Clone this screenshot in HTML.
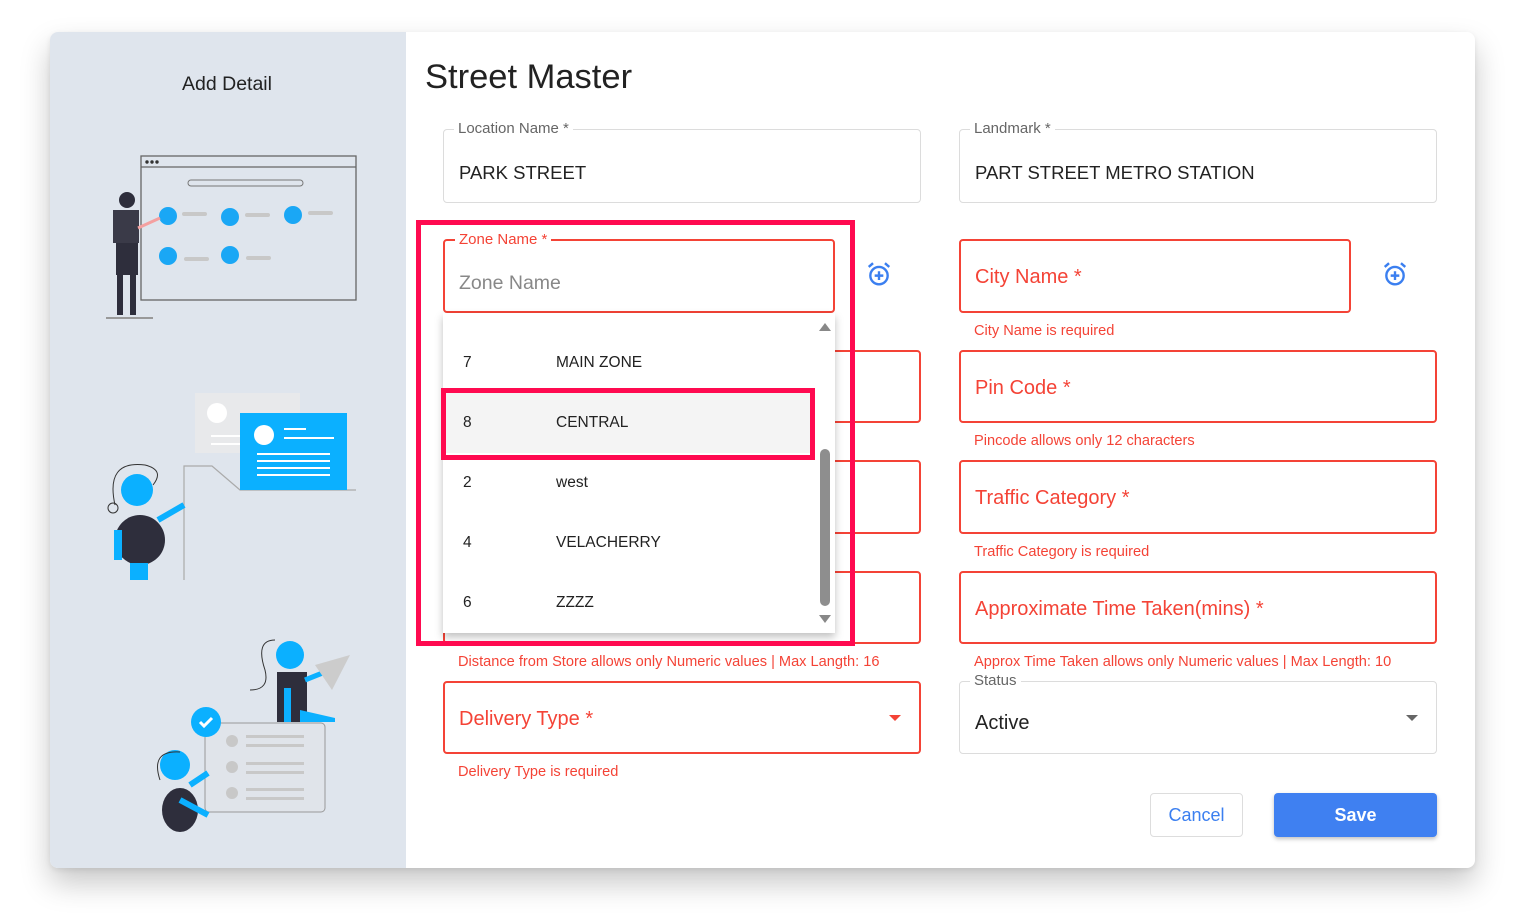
<!DOCTYPE html>
<html><head><meta charset="utf-8"><style>
*{box-sizing:border-box;margin:0;padding:0}
body{width:1519px;height:917px;background:#fff;font-family:"Liberation Sans",Arial,sans-serif;position:relative;overflow:hidden}
.card{position:absolute;left:50px;top:32px;width:1425px;height:836px;background:#fff;border-radius:8px;box-shadow:0 15px 30px rgba(0,0,0,.22),0 2px 6px rgba(0,0,0,.08);overflow:hidden}
.left{position:absolute;left:0;top:0;width:356px;height:836px;background:#dfe5ed}
.a{position:absolute}
.f{position:absolute;border:1px solid #dcdcdc;border-radius:4px}
.f.r{border:2px solid #f44336}
.lab{position:absolute;top:-10px;left:10px;background:#fff;padding:0 4px;font-size:15px;color:#666}
.r .lab{color:#f44336}
.val{position:absolute;left:15px;font-size:18.5px;color:#222}
.ph{position:absolute;left:14px;font-size:20px;color:#f44336}
.err{position:absolute;font-size:14.6px;color:#f44336}
.it{position:absolute;left:0;width:372px;height:60px;font-size:15.5px;color:#222}
.it span{position:absolute;top:50%;transform:translateY(-50%)}
</style></head><body>
<div class="card">
<div class="left">
<div class="a" style="left:132px;top:41px;font-size:19.5px;color:#222">Add Detail</div>
<svg class="a" style="left:0;top:0" width="356" height="836" viewBox="50 32 356 836">
<!-- ill 1 -->
<rect x="141" y="156" width="215" height="144" fill="none" stroke="#666" stroke-width="1.3"/>
<line x1="141" y1="167" x2="356" y2="167" stroke="#666" stroke-width="1.2"/>
<rect x="188" y="180" width="115" height="6" rx="3" fill="none" stroke="#777"/>
<circle cx="147" cy="162" r="1.7" fill="#333"/><circle cx="152" cy="162" r="1.7" fill="#333"/><circle cx="157" cy="162" r="1.7" fill="#333"/>
<g fill="#1aa7f5"><circle cx="168" cy="216" r="9"/><circle cx="230" cy="217" r="9"/><circle cx="293" cy="215" r="9"/><circle cx="168" cy="256" r="9"/><circle cx="230" cy="255" r="9"/></g>
<g fill="#c8c8c8"><rect x="182" y="212" width="25" height="4" rx="2"/><rect x="245" y="213" width="25" height="4" rx="2"/><rect x="308" y="211" width="25" height="4" rx="2"/><rect x="184" y="257" width="25" height="4" rx="2"/><rect x="246" y="256" width="25" height="4" rx="2"/></g>
<circle cx="127" cy="200" r="8" fill="#2e2e3c"/>
<rect x="113" y="210" width="26" height="33" fill="#3a3a48"/><rect x="116" y="243" width="22" height="32" fill="#2e2e3c"/>
<rect x="117" y="275" width="6" height="40" fill="#2e2e3c"/><rect x="130" y="275" width="6" height="40" fill="#2e2e3c"/>
<line x1="138" y1="228" x2="160" y2="218" stroke="#f4a0a0" stroke-width="3"/>
<line x1="106" y1="318" x2="153" y2="318" stroke="#999" stroke-width="2"/>
<!-- ill 2 -->
<rect x="195" y="393" width="105" height="60" fill="#e8e9eb"/>
<circle cx="217" cy="413" r="10" fill="#fff"/>
<g fill="#fff"><rect x="211" y="435" width="30" height="2"/><rect x="211" y="443" width="30" height="2"/></g>
<path d="M184 580 V466 h28 l28 24 h116" fill="#dfe5ed" stroke="#aaa" stroke-width="1.2"/>
<rect x="240" y="413" width="107" height="77" fill="#0bb0ff"/>
<circle cx="264" cy="435" r="10" fill="#fff"/>
<g fill="#fff"><rect x="284" y="428" width="22" height="2"/><rect x="284" y="437" width="50" height="2"/><rect x="257" y="453" width="73" height="2"/><rect x="257" y="460" width="73" height="2"/><rect x="257" y="467" width="73" height="2"/><rect x="257" y="474" width="73" height="2"/></g>
<path d="M115 505 q-10 -45 30 -40 q20 5 8 20" fill="none" stroke="#333"/><circle cx="113" cy="508" r="5" fill="none" stroke="#333"/>
<circle cx="137" cy="490" r="16" fill="#0bb0ff"/>
<ellipse cx="140" cy="540" rx="25" ry="25" fill="#2e2e3c"/>
<rect x="114" y="530" width="8" height="30" fill="#0bb0ff"/><rect x="130" y="563" width="18" height="17" fill="#0bb0ff"/>
<line x1="158" y1="520" x2="184" y2="505" stroke="#0bb0ff" stroke-width="6"/>
<!-- ill 3 -->
<rect x="205" y="723" width="120" height="89" rx="4" fill="#e0e4ea" stroke="#999"/>
<g fill="#c8c8c8"><circle cx="232" cy="741" r="6"/><circle cx="232" cy="767" r="6"/><circle cx="232" cy="793" r="6"/>
<rect x="246" y="735" width="58" height="3"/><rect x="246" y="744" width="58" height="3"/><rect x="246" y="762" width="58" height="3"/><rect x="246" y="771" width="58" height="3"/><rect x="246" y="788" width="58" height="3"/><rect x="246" y="797" width="58" height="3"/></g>
<circle cx="206" cy="722" r="15" fill="#0bb0ff"/><path d="M200 722 l4 4 l8 -8" stroke="#fff" stroke-width="3" fill="none"/>
<path d="M275 640 q-20 0 -10 30 q5 20 -15 20" fill="none" stroke="#333"/>
<circle cx="290" cy="655" r="14" fill="#0bb0ff"/><rect x="277" y="672" width="30" height="50" fill="#2e2e3c"/><rect x="284" y="688" width="7" height="34" fill="#0bb0ff"/>
<path d="M300 710 l35 8 v4 h-35z" fill="#0bb0ff"/>
<line x1="305" y1="680" x2="325" y2="672" stroke="#0bb0ff" stroke-width="5"/>
<path d="M315 665 L350 655 L332 690Z" fill="#ccc"/>
<circle cx="175" cy="765" r="15" fill="#0bb0ff"/><path d="M160 780 q-10 -30 20 -28" fill="none" stroke="#333"/>
<ellipse cx="180" cy="810" rx="18" ry="22" fill="#2e2e3c"/>
<line x1="180" y1="800" x2="208" y2="815" stroke="#0bb0ff" stroke-width="6"/><line x1="190" y1="785" x2="208" y2="773" stroke="#0bb0ff" stroke-width="6"/>
</svg>
</div>
<div class="a" style="left:375px;top:26px;font-size:34.5px;color:#222">Street Master</div>
</div>

<div class="f" style="left:443px;top:129px;width:478px;height:74px"><div class="lab">Location Name *</div><div class="val" style="top:32px">PARK STREET</div></div>
<div class="f" style="left:959px;top:129px;width:478px;height:74px"><div class="lab">Landmark *</div><div class="val" style="top:32px">PART STREET METRO STATION</div></div>

<div class="f r" style="left:443px;top:239px;width:392px;height:74px"><div class="lab">Zone Name *</div><div class="val" style="top:31px;color:#888;left:14px;font-size:19.5px">Zone Name</div></div>
<div class="f r" style="left:959px;top:239px;width:392px;height:74px"><div class="ph" style="top:25px">City Name *</div></div>
<div class="err" style="left:974px;top:323px">City Name is required</div>

<div class="f r" style="left:443px;top:350px;width:478px;height:73px"></div>
<div class="f r" style="left:959px;top:350px;width:478px;height:73px"><div class="ph" style="top:25px">Pin Code *</div></div>
<div class="err" style="left:974px;top:433px">Pincode allows only 12 characters</div>

<div class="f r" style="left:443px;top:460px;width:478px;height:74px"></div>
<div class="f r" style="left:959px;top:460px;width:478px;height:74px"><div class="ph" style="top:25px">Traffic Category *</div></div>
<div class="err" style="left:974px;top:544px">Traffic Category is required</div>

<div class="f r" style="left:443px;top:571px;width:478px;height:73px"></div>
<div class="f r" style="left:959px;top:571px;width:478px;height:73px"><div class="ph" style="top:25px">Approximate Time Taken(mins) *</div></div>
<div class="err" style="left:458px;top:654px">Distance from Store allows only Numeric values | Max Langth: 16</div>
<div class="err" style="left:974px;top:654px">Approx Time Taken allows only Numeric values | Max Length: 10</div>

<div class="f r" style="left:443px;top:681px;width:478px;height:73px"><div class="ph" style="top:25px">Delivery Type *</div>
<div class="a" style="right:18px;top:32px;width:0;height:0;border-left:6px solid transparent;border-right:6px solid transparent;border-top:6px solid #f44336"></div></div>
<div class="err" style="left:458px;top:764px">Delivery Type is required</div>
<div class="f" style="left:959px;top:681px;width:478px;height:73px"><div class="lab">Status</div><div class="val" style="top:30px;font-size:20px">Active</div>
<div class="a" style="right:18px;top:33px;width:0;height:0;border-left:6px solid transparent;border-right:6px solid transparent;border-top:6px solid #666"></div></div>

<div class="a" style="left:1150px;top:793px;width:93px;height:44px;border:1px solid #ddd;border-radius:4px;color:#3b7ff0;font-size:18px;text-align:center;line-height:42px">Cancel</div>
<div class="a" style="left:1274px;top:793px;width:163px;height:44px;background:#3f80f1;border-radius:4px;color:#fff;font-size:18px;font-weight:bold;text-align:center;line-height:44px;box-shadow:0 2px 4px rgba(0,0,0,.25)">Save</div>

<svg class="a" style="left:866px;top:261px" width="26" height="26" viewBox="0 0 24 24"><circle cx="12" cy="13.5" r="8" fill="none" stroke="#3b7ff0" stroke-width="2.2"/><path d="M12 9.5v8M8 13.5h8" stroke="#3b7ff0" stroke-width="2.2"/><path d="M2.5 5.5l4-3.5M21.5 5.5l-4-3.5" stroke="#3b7ff0" stroke-width="2.2"/></svg>
<svg class="a" style="left:1382px;top:261px" width="26" height="26" viewBox="0 0 24 24"><circle cx="12" cy="13.5" r="8" fill="none" stroke="#3b7ff0" stroke-width="2.2"/><path d="M12 9.5v8M8 13.5h8" stroke="#3b7ff0" stroke-width="2.2"/><path d="M2.5 5.5l4-3.5M21.5 5.5l-4-3.5" stroke="#3b7ff0" stroke-width="2.2"/></svg>

<div class="a" style="left:443px;top:313px;width:392px;height:320px;background:#fff;box-shadow:0 4px 8px rgba(0,0,0,.25);overflow:hidden">
<div class="it" style="top:20px"><span style="left:20px">7</span><span style="left:113px">MAIN ZONE</span></div>
<div class="it" style="top:80px;background:#f4f4f4"><span style="left:20px">8</span><span style="left:113px">CENTRAL</span></div>
<div class="it" style="top:140px"><span style="left:20px">2</span><span style="left:113px">west</span></div>
<div class="it" style="top:200px"><span style="left:20px">4</span><span style="left:113px">VELACHERRY</span></div>
<div class="it" style="top:260px"><span style="left:20px">6</span><span style="left:113px">ZZZZ</span></div>
<div class="a" style="left:376px;top:10px;width:0;height:0;border-left:6px solid transparent;border-right:6px solid transparent;border-bottom:8px solid #888"></div>
<div class="a" style="left:376px;top:302px;width:0;height:0;border-left:6px solid transparent;border-right:6px solid transparent;border-top:8px solid #888"></div>
<div class="a" style="left:377px;top:136px;width:10px;height:157px;background:#8e8e8e;border-radius:5px"></div>
</div>
<div class="a" style="left:441px;top:388px;width:374px;height:72px;border:5px solid #ff0a50"></div>
<div class="a" style="left:416px;top:220px;width:439px;height:426px;border:5px solid #ff0a50"></div>
</body></html>
